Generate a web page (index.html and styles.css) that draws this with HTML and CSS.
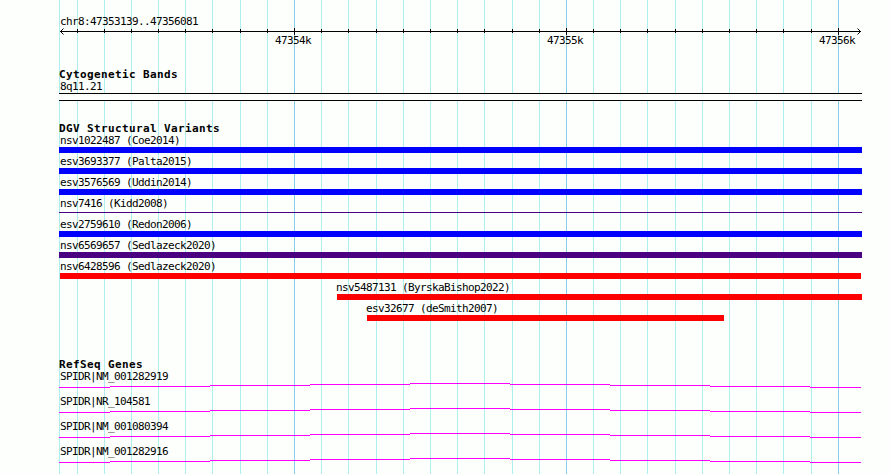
FILE: index.html
```html
<!DOCTYPE html>
<html lang="en">
<head>
<meta charset="utf-8">
<title>chr8:47353139..47356081</title>
<link rel="stylesheet" href="styles.css">
</head>
<body>
<svg class="grid" width="890" height="474" aria-hidden="true">
<path class="minor" d="M59.5 0V474M77.5 0V474M104.5 0V474M131.5 0V474M158.5 0V474M185.5 0V474M212.5 0V474M240.5 0V474M267.5 0V474M321.5 0V474M348.5 0V474M376.5 0V474M403.5 0V474M430.5 0V474M457.5 0V474M484.5 0V474M512.5 0V474M539.5 0V474M593.5 0V474M620.5 0V474M647.5 0V474M675.5 0V474M702.5 0V474M729.5 0V474M756.5 0V474M783.5 0V474M811.5 0V474"/>
<path class="major" d="M294.5 0V474M566.5 0V474M838.5 0V474"/>
</svg>
<main class="browser">
<header class="ruler">
<div class="label">chr8:47353139..47356081</div>
<svg class="axis" width="803" height="19" viewBox="59 28 803 19">
<path d="M60 31.5H861M77.5 29v4M104.5 29v4M131.5 29v4M158.5 29v4M185.5 29v4M212.5 29v4M240.5 29v4M267.5 29v4M294.5 28v7M321.5 29v4M348.5 29v4M376.5 29v4M403.5 29v4M430.5 29v4M457.5 29v4M484.5 29v4M512.5 29v4M539.5 29v4M566.5 28v7M593.5 29v4M620.5 29v4M647.5 29v4M675.5 29v4M702.5 29v4M729.5 29v4M756.5 29v4M783.5 29v4M811.5 29v4M838.5 28v7"/>
<path class="arrow" d="M63.5 28.5L60.5 31.5L63.5 34.5M857.5 28.5L860.5 31.5L857.5 34.5"/>
<text x="275" y="44">47354k</text><text x="547" y="44">47355k</text><text x="819" y="44">47356k</text>
</svg>
</header>
<section class="bands">
<h2>Cytogenetic Bands</h2>
<div class="label">8q11.21</div>
<div class="band"></div>
</section>
<section class="variants">
<h2>DGV Structural Variants</h2>
<div class="feature"><div class="label">nsv1022487 (Coe2014)</div><div class="bar blue"></div></div>
<div class="feature"><div class="label">esv3693377 (Palta2015)</div><div class="bar blue"></div></div>
<div class="feature"><div class="label">esv3576569 (Uddin2014)</div><div class="bar blue"></div></div>
<div class="feature"><div class="label">nsv7416 (Kidd2008)</div><div class="bar thin"></div></div>
<div class="feature"><div class="label">esv2759610 (Redon2006)</div><div class="bar blue"></div></div>
<div class="feature"><div class="label">nsv6569657 (Sedlazeck2020)</div><div class="bar indigo"></div></div>
<div class="feature"><div class="label">nsv6428596 (Sedlazeck2020)</div><div class="bar red inset"></div></div>
<div class="feature byrska"><div class="label">nsv5487131 (ByrskaBishop2022)</div><div class="bar red"></div></div>
<div class="feature desmith"><div class="label">esv32677 (deSmith2007)</div><div class="bar red"></div></div>
</section>
<svg width="0" height="0" class="defs"><defs><path id="intron" d="M0 4.5H51M51 3.5H151M151 2.5H251M251 1.5H351M351 .5H451M451 1.5H551M551 2.5H651M651 3.5H751M751 4.5H802"/></defs></svg>
<section class="genes">
<h2>RefSeq Genes</h2>
<div class="gene"><div class="label">SPIDR|NM_001282919</div><svg width="803" height="5"><use href="#intron"/></svg></div>
<div class="gene"><div class="label">SPIDR|NR_104581</div><svg width="803" height="5"><use href="#intron"/></svg></div>
<div class="gene"><div class="label">SPIDR|NM_001080394</div><svg width="803" height="5"><use href="#intron"/></svg></div>
<div class="gene"><div class="label">SPIDR|NM_001282916</div><svg width="803" height="5"><use href="#intron"/></svg></div>
</section>
</main>
</body>
</html>
```
FILE: styles.css
```css
body {
  margin: 0;
  height: 474px;
  overflow: hidden;
  background: #fdfffc;
  color: #000;
  font-family: "DejaVu Sans Mono", monospace;
}
svg { display: block; fill: none; }
.grid { position: absolute; left: 0; top: 0; z-index: -1; }
.minor { stroke: #afeeee; }
.major { stroke: #87ceeb; }
.browser { width: 803px; margin-left: 59px; padding-top: 15px; }
.label, .axis text {
  font-size: 11px;
  line-height: 13px;
  letter-spacing: -0.622px;
  white-space: pre;
}
.label { height: 13px; padding-left: 1px; }
.axis { stroke: #000; }
.axis text { fill: #000; stroke: none; }
h2 {
  margin: 0;
  height: 12px;
  font-size: 11px;
  line-height: 13px;
  letter-spacing: 0.378px;
}
.bands { margin-top: 21px; }
.band {
  box-sizing: border-box;
  height: 8px;
  border: solid #000;
  border-width: 1px 0;
  background: #fdfffc;
}
.variants { margin-top: 21px; }
.feature { height: 19px; margin-bottom: 2px; }
.bar { height: 6px; }
.blue { background: #00f; }
.red { background: #f00; }
.indigo { background: #4b0082; }
.thin { height: 1px; margin-top: 2px; background: #4b0082; }
.inset { margin: 0 1px; }
.byrska { margin-left: 278px; }
.desmith { width: 357px; margin-left: 308px; }
.byrska .label, .desmith .label { margin-left: -2px; }
.defs { position: absolute; }
.genes { margin-top: 37px; }
.gene { margin-bottom: 7px; }
.gene svg { stroke: #f0f; }
```
